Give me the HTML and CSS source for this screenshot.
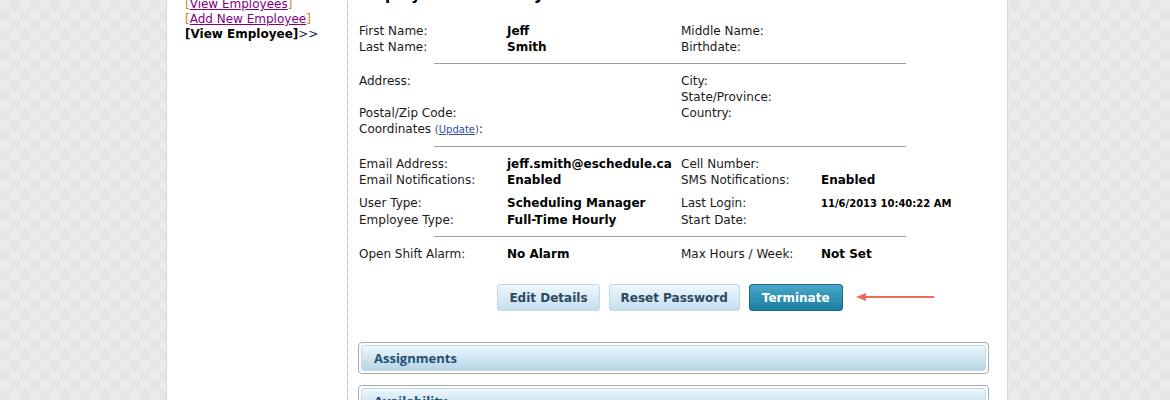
FILE: index.html
```html
<!DOCTYPE html>
<html lang="en">
<head>
  <meta charset="UTF-8" />
  <title>Employee Profile for Jeff Smith</title>
  <link rel="stylesheet" href="styles.css">
</head>
<body>
  <div class="page">
    <div class="side">
      <div><span class="br">[</span><a href="#">View Employees</a><span class="br">]</span></div>
      <div><span class="br">[</span><a href="#">Add New Employee</a><span class="br">]</span></div>
      <div class="current"><b>[View Employee]</b>&gt;&gt;</div>
    </div>

    <div class="main">
      <h2>Employee Profile for Jeff Smith</h2>

      <div class="info">
        <div class="group">
          <span>First Name:</span><b>Jeff</b><span>Middle Name:</span><b></b>
          <span>Last Name:</span><b>Smith</b><span>Birthdate:</span><b></b>
        </div>
        <hr>
        <div class="group">
          <span>Address:</span><b></b><span>City:</span><b></b>
          <span>&nbsp;</span><b></b><span>State/Province:</span><b></b>
          <span>Postal/Zip Code:</span><b></b><span>Country:</span><b></b>
          <span>Coordinates <span class="upd">(<a href="#">Update</a>)</span>:</span><b></b><span></span><b></b>
        </div>
        <hr>
        <div class="group">
          <span>Email Address:</span><b>jeff.smith@eschedule.ca</b><span>Cell Number:</span><b></b>
          <span>Email Notifications:</span><b>Enabled</b><span>SMS Notifications:</span><b>Enabled</b>
        </div>
        <div class="group gap">
          <span>User Type:</span><b>Scheduling Manager</b><span>Last Login:</span><b class="small">11/6/2013 10:40:22 AM</b>
          <span>Employee Type:</span><b>Full-Time Hourly</b><span>Start Date:</span><b></b>
        </div>
        <hr>
        <div class="group">
          <span>Open Shift Alarm:</span><b>No Alarm</b><span>Max Hours / Week:</span><b>Not Set</b>
        </div>

        <div class="actions">
          <button class="btn">Edit Details</button>
          <button class="btn">Reset Password</button>
          <button class="btn dark">Terminate</button>
          <svg class="arrow" width="80" height="10" viewBox="0 0 80 10">
            <line x1="6" y1="5" x2="78" y2="5" stroke="#f06a5a" stroke-width="2"/>
            <polygon points="0,5 10,1 10,9" fill="#f06a5a"/>
          </svg>
        </div>
      </div>

      <div class="panel"><div class="panel-head">Assignments</div></div>
      <div class="panel"><div class="panel-head">Availability</div></div>
    </div>
  </div>
</body>
</html>
```

FILE: styles.css
```css
body {
  margin: 0;
  padding-left: 4px;
  background-color: #e8e8e8;
  background-image: repeating-conic-gradient(#e5e5e5 0 25%, #ebebeb 0 50%);
  background-size: 20px 20px;
  font-family: "DejaVu Sans", Verdana, sans-serif;
  font-size: 12px;
  color: #1a1a1a;
}
.page {
  width: 840px;
  margin: -14px auto 0;
  display: flex;
  background: #fff;
  border-left: 1px solid #cfdbe3;
  border-right: 1px solid #cfdbe3;
  min-height: 460px;
}
.side {
  box-sizing: border-box;
  width: 181px;
  padding: 11px 0 0 18px;
  border-right: 1px dotted #999;
  line-height: 15px;
  color: #1c2a4a;
}
.side a { color: #800080; }
.side .br { color: #c8861e; }
.side .current b { color: #000; }
.main {
  flex: 1;
  padding: 0 18px 0 10px;
}
h2 {
  margin: 0 0 19px 1px;
  font-size: 15px;
  line-height: 18px;
  color: #000;
}
.info {
  width: 622px;
  margin-left: 1px;
}
.group {
  display: grid;
  grid-template-columns: 148px 174px 140px 160px;
  line-height: 16px;
  align-items: baseline;
}
.group.gap { margin-top: 7px; }
.group b { color: #000; }
.group b.small { font-size: 10px; }
.upd { font-size: 10px; color: #444; }
.upd a { color: #2f4fa0; }
hr {
  border: 0;
  border-top: 1px solid #a0a0a0;
  margin: 8px 75px 9px;
  height: 0;
}
.actions {
  position: relative;
  display: flex;
  justify-content: center;
  gap: 9px;
  margin-top: 22px;
}
.btn {
  height: 27px;
  padding: 0 11px;
  border: 1px solid #c4d7e2;
  border-radius: 3px;
  background: linear-gradient(#eef8fd, #c4deec);
  font-family: "DejaVu Sans", Verdana, sans-serif;
  font-size: 12px;
  font-weight: bold;
  color: #2b4862;
}
.btn.dark {
  border-color: #1a6d8e;
  background: linear-gradient(#4aa7c7, #1a7ea2);
  color: #fff;
  padding: 0 12px;
}
.arrow {
  position: absolute;
  left: 497px;
  top: 8px;
}
.panel {
  margin-top: 31px;
  padding: 2px;
  border: 1px solid #a9a9a9;
  border-radius: 4px;
}
.panel + .panel { margin-top: 11px; }
.panel-head {
  height: 24px;
  line-height: 24px;
  padding-left: 12px;
  border: 1px solid #c3d9e6;
  border-radius: 3px;
  background: linear-gradient(#ecf8fd, #b6d4e5);
  font-family: "Open Sans", sans-serif;
  font-size: 13px;
  font-weight: bold;
  color: #1f4f72;
}
```
